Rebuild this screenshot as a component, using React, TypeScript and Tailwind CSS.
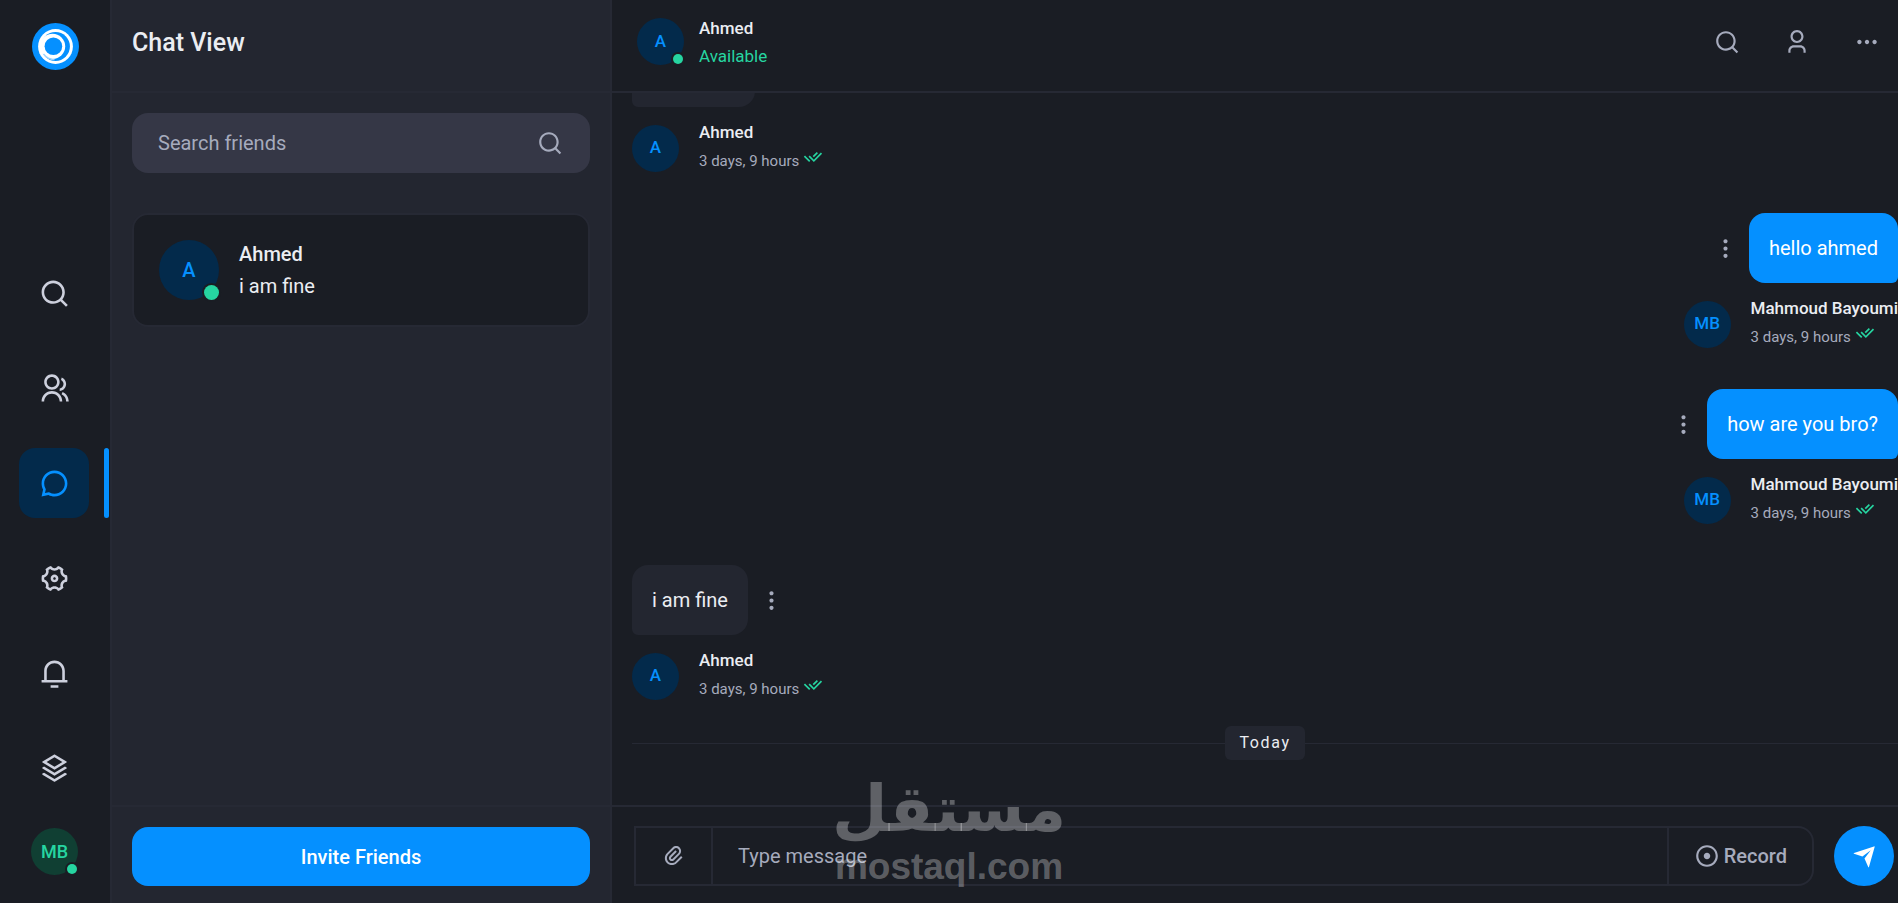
import React from "react";
import {
  RiAttachment2,
  RiChat3Line,
  RiCheckDoubleLine,
  RiGroupLine,
  RiMore2Fill,
  RiMoreFill,
  RiNotification3Line,
  RiRecordCircleLine,
  RiSearchLine,
  RiSendPlaneFill,
  RiSettings4Line,
  RiStackLine,
  RiUser3Line,
} from "react-icons/ri";

const navItems = [
  { label: "Search", icon: RiSearchLine },
  { label: "Friends", icon: RiGroupLine },
  { label: "Chats", icon: RiChat3Line, active: true },
  { label: "Settings", icon: RiSettings4Line },
  { label: "Notifications", icon: RiNotification3Line },
  { label: "More", icon: RiStackLine },
];

const messages = [
  { id: 1, author: "Mahmoud Bayoumi", initials: "MB", text: "hello ahmed", time: "3 days, 9 hours", mine: true },
  { id: 2, author: "Mahmoud Bayoumi", initials: "MB", text: "how are you bro?", time: "3 days, 9 hours", mine: true },
  { id: 3, author: "Ahmed", initials: "A", text: "i am fine", time: "3 days, 9 hours", mine: false },
];

function Logo() {
  return (
    <svg viewBox="0 0 47 47" className="size-[47px]" role="img" aria-label="Logo">
      <circle cx="23.5" cy="23.5" r="23.5" fill="#0590ff" />
      <circle cx="23.5" cy="23.5" r="17.4" fill="#fff" />
      <circle cx="23.5" cy="23.5" r="14.4" fill="#0590ff" />
      <circle cx="20.6" cy="23.3" r="12.6" fill="#fff" />
      <circle cx="21.4" cy="23.3" r="8.8" fill="#0590ff" />
      <path d="M11.5 31a14.4 14.4 0 0 0 11 5.6" fill="none" stroke="#9dd3ff" strokeWidth="1.4" />
    </svg>
  );
}

function Avatar({ initials, online, large }: { initials: string; online?: boolean; large?: boolean }) {
  return (
    <div
      className={`relative flex shrink-0 items-center justify-center rounded-full bg-[#032a4b] font-medium text-[#0590ff] ${
        large ? "size-15 text-xl" : "size-[47px] text-[17px]"
      }`}
    >
      {initials}
      {online && (
        <span
          className={`absolute rounded-full bg-[#26d5a1] ring-2 ring-[#1a1d24] ${
            large ? "right-0 bottom-0 size-[15px]" : "right-px bottom-px size-[10px]"
          }`}
        />
      )}
    </div>
  );
}

function MessageMeta({ author, initials, time }: { author: string; initials: string; time: string }) {
  return (
    <div className="flex items-center gap-5">
      <Avatar initials={initials} />
      <div className="whitespace-nowrap">
        <h6 className="text-[17px] leading-[26px] font-medium text-[#ebedf2]">{author}</h6>
        <div className="flex gap-1 text-[15px] leading-8 text-[#a6abbd]">
          {time}
          <RiCheckDoubleLine size={20} className="mt-0.5 text-[#26d5a1]" />
        </div>
      </div>
    </div>
  );
}

function Message({ message }: { message: (typeof messages)[number] }) {
  const { author, initials, text, time, mine } = message;

  return (
    <div className={`flex flex-col ${mine ? "items-end" : "items-start"}`}>
      <div className={`flex items-center gap-[11px] ${mine ? "flex-row-reverse" : ""}`}>
        <p
          className={`rounded-2xl px-5 py-5 text-xl leading-[30px] ${
            mine ? "rounded-br-md bg-[#0590ff] text-white" : "rounded-bl-md bg-[#232630] text-[#ebedf2]"
          }`}
        >
          {text}
        </p>
        <button aria-label="Message options" className="text-[#a6abbd]">
          <RiMore2Fill size={25} />
        </button>
      </div>
      <div className="mt-3">
        <MessageMeta author={author} initials={initials} time={time} />
      </div>
    </div>
  );
}

function Sidebar() {
  return (
    <aside className="flex w-28 shrink-0 flex-col items-center justify-between border-r-2 border-[#262934] bg-[#1a1d24]">
      <a href="#" className="mt-[23px]">
        <Logo />
      </a>
      <div className="flex w-full flex-col gap-[25px]">
        <nav className="flex flex-col gap-[25px]">
          {navItems.map(({ label, icon: Icon, active }) => (
            <div key={label} className="flex justify-between">
              <a
                href="#"
                aria-label={label}
                className={`ml-[19px] flex size-[70px] items-center justify-center rounded-2xl ${
                  active ? "bg-[#032a4b] text-[#0590ff]" : "text-[#cdd0dd]"
                }`}
              >
                <Icon size={31} />
              </a>
              {active && <span className="mr-px w-[5px] rounded-full bg-[#0590ff]" />}
            </div>
          ))}
        </nav>
        <button
          aria-label="Your profile"
          className="relative mr-px mb-7 flex size-[47px] items-center justify-center self-center rounded-full bg-[#103f33] text-lg font-medium text-[#26d5a1]"
        >
          MB
          <span className="absolute right-px bottom-px size-[10px] rounded-full bg-[#26d5a1] ring-2 ring-[#1a1d24]" />
        </button>
      </div>
    </aside>
  );
}

function ChatList() {
  return (
    <section className="flex w-[500px] shrink-0 flex-col border-r-2 border-[#262934] bg-[#232630]">
      <header className="flex h-[93px] shrink-0 items-center border-b-2 border-[#262934] px-5 pb-1.5">
        <h1 className="text-[25px] leading-8 font-medium text-[#ebedf2]">Chat View</h1>
      </header>

      <div className="flex flex-1 flex-col gap-10 p-5">
        <label className="flex h-15 items-center rounded-2xl bg-[#353746] pr-[27px] pl-[26px]">
          <input
            type="text"
            placeholder="Search friends"
            aria-label="Search friends"
            className="min-w-0 flex-1 bg-transparent text-xl text-[#ebedf2] outline-none placeholder:text-[#a6abbd]"
          />
          <RiSearchLine size={26} className="text-[#a6abbd]" />
        </label>

        <a
          href="#"
          className="flex items-center gap-5 rounded-2xl border-2 border-[#262934] bg-[#1a1d24] px-[25px] py-[23px] text-[#ebedf2]"
        >
          <Avatar initials="A" online large />
          <div className="text-xl leading-8">
            <h5 className="font-medium">Ahmed</h5>
            <p>i am fine</p>
          </div>
        </a>
      </div>

      <footer className="border-t-2 border-[#262934] px-5 pt-5 pb-[17px]">
        <button className="h-[59px] w-full rounded-2xl bg-[#0590ff] text-xl font-medium text-white">
          Invite Friends
        </button>
      </footer>
    </section>
  );
}

function ChatHeader() {
  return (
    <header className="flex h-[93px] shrink-0 items-center justify-between border-b-2 border-[#262934] pr-[18px] pb-2 pl-[25px]">
      <div className="flex items-center gap-[15px]">
        <Avatar initials="A" online />
        <div className="text-[17px] leading-7">
          <h6 className="font-medium text-[#ebedf2]">Ahmed</h6>
          <p className="text-[#26d5a1]">Available</p>
        </div>
      </div>
      <div className="flex items-center gap-11 text-[#a6abbd]">
        <button aria-label="Search in chat">
          <RiSearchLine size={26} />
        </button>
        <button aria-label="Contact info">
          <RiUser3Line size={26} />
        </button>
        <button aria-label="More">
          <RiMoreFill size={26} />
        </button>
      </div>
    </header>
  );
}

function Composer() {
  return (
    <footer className="relative border-t-2 border-[#262934] px-1 pt-[19px] pb-[17px]">
      <form className="flex gap-5 pl-[18px]" onSubmit={(e) => e.preventDefault()}>
        <div className="flex h-15 flex-1 rounded-r-2xl border-2 border-[#262934] text-xl text-[#a6abbd]">
          <button type="button" aria-label="Attach file" className="flex w-[77px] items-center justify-center border-r-2 border-[#262934]">
            <RiAttachment2 size={24} />
          </button>
          <input
            type="text"
            placeholder="Type message"
            aria-label="Type message"
            className="min-w-0 flex-1 bg-transparent px-[25px] text-[#ebedf2] outline-none placeholder:text-[#a6abbd]"
          />
          <button type="button" className="flex items-center gap-1 border-l-2 border-[#262934] px-[25px] font-medium">
            <RiRecordCircleLine size={26} />
            Record
          </button>
        </div>
        <button type="submit" aria-label="Send" className="flex size-15 items-center justify-center rounded-full bg-[#0590ff] text-white">
          <RiSendPlaneFill size={25} />
        </button>
      </form>

      {/* Watermark over the composer */}
      <div className="pointer-events-none absolute -top-10 left-[222px] flex w-[230px] flex-col items-center text-white/30">
        <span dir="rtl" className="font-['DejaVu_Sans',sans-serif] text-[64px] leading-[84px] font-bold">
          مستقل
        </span>
        <span className="-mt-1 font-['Liberation_Sans',sans-serif] text-[37px] leading-10 font-bold">mostaql.com</span>
      </div>
    </footer>
  );
}

export default function App() {
  return (
    <div className="flex h-screen overflow-hidden bg-[#1a1d24] font-['Roboto',sans-serif]">
      <Sidebar />
      <ChatList />

      <main className="flex min-w-0 flex-1 flex-col">
        <ChatHeader />

        {/* Messages, scrolled to the latest one */}
        <div className="flex min-h-0 flex-1 flex-col justify-end overflow-hidden pb-[45px] pl-5">
          <div className="flex flex-col gap-9">
            <div className="flex flex-col items-start gap-3">
              <p className="h-[70px] w-[123px] rounded-2xl rounded-bl-md bg-[#232630]" />
              <MessageMeta author="Ahmed" initials="A" time="3 days, 9 hours" />
            </div>
            {messages.map((message) => (
              <Message key={message.id} message={message} />
            ))}
          </div>
          <div className="mt-[21px] flex items-center">
            <span className="h-px flex-1 bg-[#262934]" />
            <span className="rounded-md bg-[#232630] px-[14px] text-base leading-[34px] tracking-widest text-[#ebedf2]">Today</span>
            <span className="h-px flex-1 bg-[#262934]" />
          </div>
        </div>

        <Composer />
      </main>
    </div>
  );
}
